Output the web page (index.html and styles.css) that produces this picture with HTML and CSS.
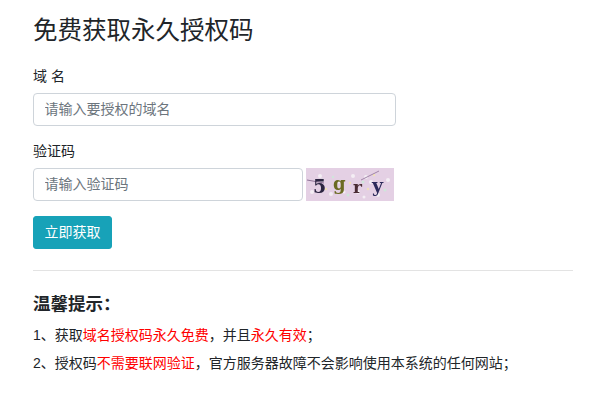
FILE: index.html
```html
<!DOCTYPE html>
<html lang="zh-CN">
<head>
  <meta charset="UTF-8" />
  <meta name="viewport" content="width=device-width, initial-scale=1" />
  <title>免费获取永久授权码</title>
  <link rel="stylesheet" href="styles.css">
</head>
<body>
  <div class="container">
    <h3 class="page-title">免费获取永久授权码</h3>

    <form class="auth-form">
      <div class="form-group">
        <label class="form-label">域 名</label>
        <input type="text" class="form-input" placeholder="请输入要授权的域名">
      </div>

      <div class="form-group">
        <label class="form-label">验证码</label>
        <div class="captcha-row">
          <input type="text" class="form-input captcha-input" placeholder="请输入验证码">
          <svg class="captcha-img" width="88" height="33" viewBox="0 0 88 33">
            <rect width="88" height="33" fill="#e4d0e4"/>
            <g fill="#f4eef4">
              <circle cx="14" cy="8" r="2"/>
              <circle cx="25" cy="26" r="2"/>
              <circle cx="33" cy="14" r="1.5"/>
              <circle cx="47" cy="8" r="2"/>
              <circle cx="52" cy="24" r="2"/>
              <circle cx="60" cy="9" r="2"/>
              <circle cx="65" cy="14" r="2"/>
              <circle cx="72" cy="27" r="2"/>
              <circle cx="82" cy="12" r="2"/>
              <circle cx="6" cy="24" r="2"/>
              <circle cx="38" cy="24" r="1.5"/>
              <circle cx="58" cy="29" r="1.5"/>
            </g>
            <g fill="#cfe6da">
              <circle cx="16" cy="12" r="1.5"/>
              <circle cx="42" cy="27" r="1.5"/>
              <circle cx="57" cy="14" r="1.5"/>
              <circle cx="79" cy="22" r="1.5"/>
              <circle cx="27" cy="9" r="1.2"/>
            </g>
            <g fill="#f0e2b8">
              <circle cx="20" cy="21" r="1.2"/>
              <circle cx="44" cy="15" r="1.2"/>
              <circle cx="68" cy="7" r="1.2"/>
              <circle cx="62" cy="21" r="1.2"/>
            </g>
            <path d="M1 12 L18 15" stroke="#8d7296" fill="none"/>
            <path d="M55 12 L73 3" stroke="#a184a8" fill="none"/>
            <text class="captcha-char" x="7" y="25" fill="#2b2440" font-size="19">5</text>
            <text class="captcha-char" x="27" y="22" fill="#6b6a22" font-size="18">g</text>
            <text class="captcha-char" x="47" y="25" fill="#4a2c34" font-size="17">r</text>
            <text class="captcha-char" x="66" y="24" fill="#2c2a5a" font-size="19">y</text>
          </svg>
        </div>
      </div>

      <button type="button" class="btn-submit">立即获取</button>
    </form>

    <hr class="divider">

    <h5 class="tips-title">温馨提示：</h5>
    <p class="tip">1、获取<span class="red">域名授权码永久免费</span>，并且<span class="red">永久有效</span>；</p>
    <p class="tip">2、授权码<span class="red">不需要联网验证</span>，官方服务器故障不会影响使用本系统的任何网站；</p>
  </div>
</body>
</html>
```

FILE: styles.css
```css
* {
  box-sizing: border-box;
}

body {
  margin: 0;
  background-color: #fff;
  color: #212529;
  font-family: "Liberation Sans", "Noto Sans CJK SC", sans-serif;
  font-size: 14px;
  line-height: 1.5;
}

.container {
  width: 540px;
  margin-left: 33px;
  padding-top: 13px;
}

.page-title {
  margin: 0 0 16px;
  font-size: 24.5px;
  font-weight: 400;
  line-height: 1.5;
}

.form-group {
  margin-bottom: 15px;
}

.form-label {
  display: block;
  margin-bottom: 6px;
}

.form-input {
  display: block;
  width: 363px;
  height: 33px;
  padding: 5px 10.5px;
  border: 1px solid #ced4da;
  border-radius: 4px;
  background-color: #fff;
  color: #495057;
  font: inherit;
}

.form-input::placeholder {
  color: #6c757d;
  opacity: 1;
}

.captcha-row {
  display: flex;
  align-items: center;
}

.captcha-input {
  width: 270px;
}

.captcha-img {
  display: block;
  margin-left: 3px;
  filter: blur(0.4px);
}

.captcha-char {
  font-family: "DejaVu Serif", "Liberation Serif", serif;
  font-weight: 700;
}

.btn-submit {
  display: block;
  height: 33px;
  margin-top: 14px;
  padding: 0 10.5px;
  border: 1px solid #17a2b8;
  border-radius: 3px;
  background-color: #17a2b8;
  color: #fff;
  font: inherit;
  cursor: pointer;
}

.divider {
  margin: 21px 0 20px;
  border: 0;
  border-top: 1px solid #e3e3e3;
}

.tips-title {
  margin: 0 0 8px;
  font-size: 17.5px;
  font-weight: 700;
  line-height: 1.5;
}

.tip {
  margin: 0 0 7px;
  font-size: 14px;
  line-height: 21px;
}

.red {
  color: #f00;
}
```
